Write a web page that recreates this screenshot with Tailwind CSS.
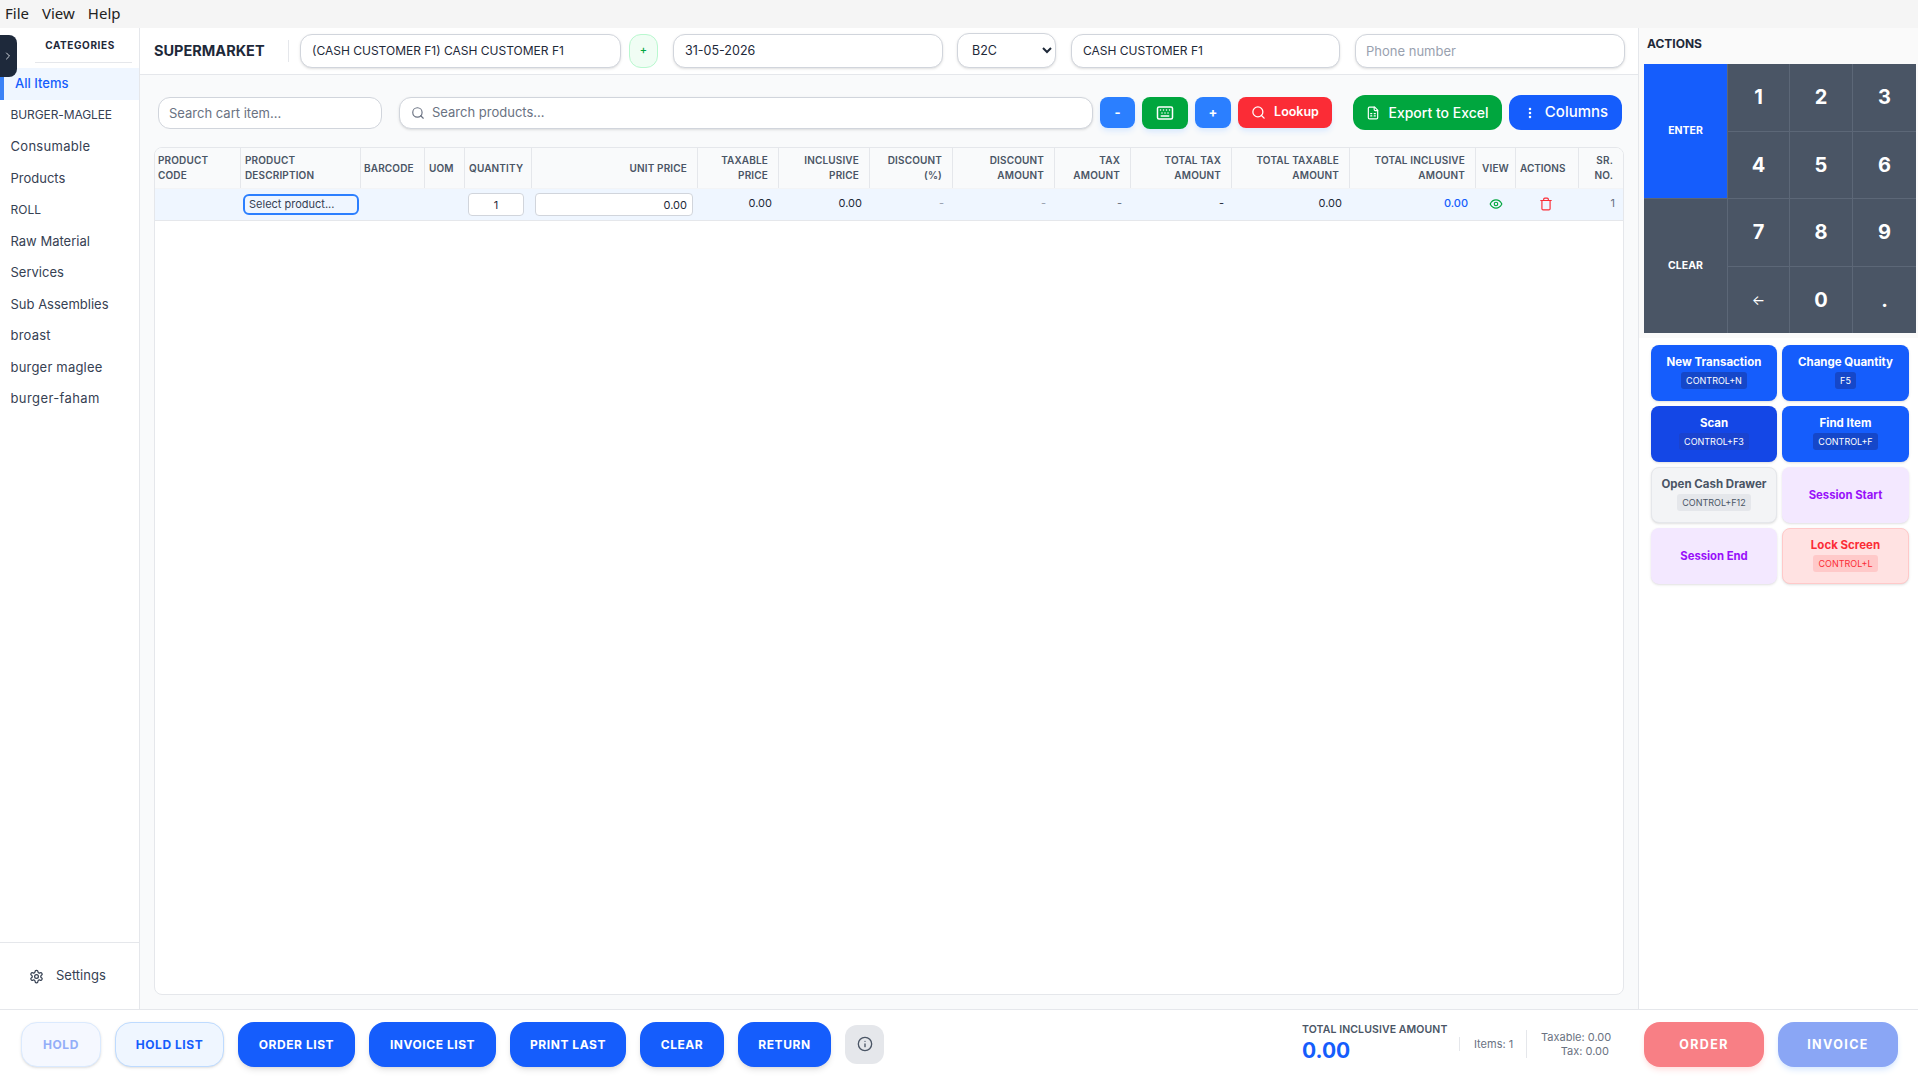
<!DOCTYPE html>
<html lang="en">
<head>
<meta charset="utf-8">
<title>POS</title>
<script src="https://cdn.jsdelivr.net/npm/@tailwindcss/browser@4"></script>
</head>
<body class="m-0 overflow-hidden font-['Inter',sans-serif] text-[#1e2939]">
<div class="relative flex h-[1078px] w-[1918px] flex-col bg-white">
  <!-- menu -->
  <div class="flex h-7 items-center gap-[13px] bg-[#f5f5f5] pb-[2px] pl-[5px] font-['Noto_Sans',sans-serif] text-[15px] text-[#222]">
    <span>File</span><span>View</span><span>Help</span>
  </div>

  <div class="flex min-h-0 flex-1">
    <!-- sidebar -->
    <aside class="flex w-[140px] flex-col border-r border-gray-200 bg-white">
      <div class="mx-auto mb-[5px] ml-[35px] flex h-[35px] w-[97px] items-center justify-center border-b border-gray-200 pr-[7px] text-[10px] font-bold tracking-[0.6px] text-[#1e2939]">CATEGORIES</div>
      <nav class="flex flex-col text-[13px] text-[#364153]">
        <a class="flex h-[31.5px] items-center border-l-4 border-[#3b82f6] bg-[#eff6ff] pl-[11px] font-medium text-[#155dfc]">All Items</a>
        <a class="flex h-[31.5px] items-center pl-[10.5px] text-[12px] tracking-[-0.1px]">BURGER-MAGLEE</a>
        <a class="flex h-[31.5px] items-center pl-[10.5px] tracking-[0.3px]">Consumable</a>
        <a class="flex h-[31.5px] items-center pl-[10.5px]">Products</a>
        <a class="flex h-[31.5px] items-center pl-[10.5px] text-[12px]">ROLL</a>
        <a class="flex h-[31.5px] items-center pl-[10.5px]">Raw Material</a>
        <a class="flex h-[31.5px] items-center pl-[10.5px]">Services</a>
        <a class="flex h-[31.5px] items-center pl-[10.5px]">Sub Assemblies</a>
        <a class="flex h-[31.5px] items-center pl-[10.5px] tracking-[0.2px]">broast</a>
        <a class="flex h-[31.5px] items-center pl-[10.5px] tracking-[0.2px]">burger maglee</a>
        <a class="flex h-[31.5px] items-center pl-[10.5px] tracking-[0.4px]">burger-faham</a>
      </nav>
      <div class="mt-auto flex h-[67px] items-center gap-[12px] border-t border-gray-200 pl-[29px] text-[13px] text-[#364153]">
        <svg class="h-[15px] w-[15px]" viewBox="0 0 24 24" fill="none" stroke="currentColor" stroke-width="2" stroke-linecap="round" stroke-linejoin="round"><path d="M12.22 2h-.44a2 2 0 0 0-2 2v.18a2 2 0 0 1-1 1.73l-.43.25a2 2 0 0 1-2 0l-.15-.08a2 2 0 0 0-2.73.73l-.22.38a2 2 0 0 0 .73 2.73l.15.1a2 2 0 0 1 1 1.72v.51a2 2 0 0 1-1 1.74l-.15.09a2 2 0 0 0-.73 2.73l.22.38a2 2 0 0 0 2.73.73l.15-.08a2 2 0 0 1 2 0l.43.25a2 2 0 0 1 1 1.73V20a2 2 0 0 0 2 2h.44a2 2 0 0 0 2-2v-.18a2 2 0 0 1 1-1.73l.43-.25a2 2 0 0 1 2 0l.15.08a2 2 0 0 0 2.73-.73l.22-.39a2 2 0 0 0-.73-2.73l-.15-.08a2 2 0 0 1-1-1.74v-.5a2 2 0 0 1 1-1.74l.15-.09a2 2 0 0 0 .73-2.73l-.22-.38a2 2 0 0 0-2.73-.73l-.15.08a2 2 0 0 1-2 0l-.43-.25a2 2 0 0 1-1-1.73V4a2 2 0 0 0-2-2z"/><circle cx="12" cy="12" r="3"/></svg>
        <span>Settings</span>
      </div>
    </aside>

    <!-- main -->
    <main class="flex min-w-0 flex-1 flex-col bg-[#f9fafb]">
      <header class="flex h-[47px] items-center border-b border-gray-200 bg-white pl-[14px] pb-px text-[13px]">
        <div class="w-[135px] border-r border-gray-200 text-[14.5px] leading-[22px] font-bold text-[#1e2939]">SUPERMARKET</div>
        <input class="ml-[11px] h-[34px] w-[321px] rounded-xl border border-gray-300 bg-white px-[11px] text-[12px] shadow-sm outline-none" value="(CASH CUSTOMER F1) CASH CUSTOMER F1">
        <button class="ml-[8px] flex h-[34px] w-[29px] items-center justify-center rounded-xl border border-green-200 bg-green-50 text-[11px] font-medium text-[#00a63e]">+</button>
        <input class="ml-[15px] h-[34px] w-[270px] rounded-xl border border-gray-300 bg-white px-[11px] text-[12.5px] shadow-sm outline-none" value="31-05-2026">
        <select class="ml-[14px] h-[35px] w-[99px] rounded-xl border border-gray-300 bg-white px-2.5 text-[12.5px] shadow-sm outline-none"><option>B2C</option></select>
        <input class="ml-[15px] h-[34px] w-[269px] rounded-xl border border-gray-300 bg-white px-[11px] text-[12px] shadow-sm outline-none" value="CASH CUSTOMER F1">
        <input class="ml-[15px] h-[34px] w-[270px] rounded-xl border border-gray-300 bg-white px-[10px] shadow-sm outline-none placeholder:text-gray-400" placeholder="Phone number">
      </header>

      <!-- toolbar -->
      <div class="flex h-[72px] items-center pt-[3px] pr-[16px] pl-[18px] text-[13px]">
        <input class="h-8 w-[224px] rounded-xl border border-gray-300 bg-white px-[10px] outline-none placeholder:text-gray-500" placeholder="Search cart item...">
        <div class="ml-[17px] flex h-8 w-[694px] items-center gap-[7px] rounded-xl border border-gray-300 bg-white pl-[11px] shadow-sm">
          <svg class="h-[14px] w-[14px] text-gray-500" viewBox="0 0 24 24" fill="none" stroke="currentColor" stroke-width="2" stroke-linecap="round" stroke-linejoin="round"><circle cx="11" cy="11" r="8"/><path d="m21 21-4.3-4.3"/></svg>
          <input class="min-w-0 flex-1 bg-transparent outline-none placeholder:text-gray-500" placeholder="Search products...">
        </div>
        <button class="ml-[7px] flex h-[31px] w-[35px] items-center justify-center rounded-lg bg-[#2b7fff] text-[13px] font-bold text-white shadow-md shadow-blue-100">-</button>
        <button class="ml-[7px] flex h-8 w-[46px] items-center justify-center rounded-lg bg-[#00a63e] text-white shadow-md shadow-blue-100">
          <svg class="h-[18px] w-[18px]" viewBox="0 0 24 24" fill="none" stroke="currentColor" stroke-width="2" stroke-linecap="round" stroke-linejoin="round"><rect x="2" y="4" width="20" height="16" rx="2"/><path d="M6 8h.01M10 8h.01M14 8h.01M18 8h.01M8 12h.01M12 12h.01M16 12h.01M7 16h10"/></svg>
        </button>
        <button class="ml-[7px] flex h-[31px] w-[36px] items-center justify-center rounded-lg bg-[#2b7fff] text-[13px] font-bold text-white shadow-md shadow-blue-100">+</button>
        <button class="ml-[7px] flex h-[31px] w-[94px] items-center justify-center gap-[8px] rounded-lg bg-[#fb2c36] text-[12.5px] font-semibold text-white shadow-md shadow-blue-100">
          <svg class="h-[15px] w-[15px]" viewBox="0 0 24 24" fill="none" stroke="currentColor" stroke-width="2" stroke-linecap="round" stroke-linejoin="round"><circle cx="11" cy="11" r="8"/><path d="m21 21-4.3-4.3"/></svg>
          Lookup
        </button>
        <button class="ml-[21px] flex h-[35px] w-[149px] items-center justify-center gap-[8px] rounded-xl bg-[#00a63e] text-[14px] font-medium text-white">
          <svg class="h-[14px] w-[14px]" viewBox="0 0 24 24" fill="none" stroke="currentColor" stroke-width="2" stroke-linecap="round" stroke-linejoin="round"><path d="M15 2H6a2 2 0 0 0-2 2v16a2 2 0 0 0 2 2h12a2 2 0 0 0 2-2V7Z"/><path d="M14 2v4a2 2 0 0 0 2 2h4"/><path d="M8 13h2M14 13h2M8 17h2M14 17h2"/></svg>
          Export to Excel
        </button>
        <button class="ml-[7px] flex h-[35px] w-[113px] items-center justify-center gap-[8px] rounded-xl bg-[#155dfc] text-[15px] font-medium text-white">
          <svg class="h-[14px] w-[14px]" viewBox="0 0 24 24" fill="none" stroke="currentColor" stroke-width="2.4" stroke-linecap="round" stroke-linejoin="round"><circle cx="12" cy="12" r="1"/><circle cx="12" cy="5" r="1"/><circle cx="12" cy="19" r="1"/></svg>
          Columns
        </button>
      </div>

      <!-- table -->
      <div class="mx-[14px] mb-[14px] flex-1 overflow-hidden rounded-lg border border-gray-200 bg-white">
        <div class="grid grid-cols-[86px_120px_64px_40px_67px_166px_81px_91px_83px_102px_76px_101px_118px_126px_40px_63px_44px] border-b border-gray-100 bg-[#f9fafb] text-[10px] leading-[15px] font-semibold tracking-[0.15px] text-[#4a5565]">
          <div class="flex h-[40px] items-center border-r border-gray-200 pl-[3px]">PRODUCT<br>CODE</div>
          <div class="flex h-[40px] items-center border-r border-gray-200 pl-[4px]">PRODUCT<br>DESCRIPTION</div>
          <div class="flex h-[40px] items-center border-r border-gray-200 pl-[3px]">BARCODE</div>
          <div class="flex h-[40px] items-center border-r border-gray-200 pl-[4px]">UOM</div>
          <div class="flex h-[40px] items-center border-r border-gray-200 pl-[4px]">QUANTITY</div>
          <div class="flex h-[40px] items-center justify-end border-r border-gray-200 pr-[10px]">UNIT PRICE</div>
          <div class="flex h-[40px] items-center justify-end border-r border-gray-200 pr-[10px] text-right">TAXABLE<br>PRICE</div>
          <div class="flex h-[40px] items-center justify-end border-r border-gray-200 pr-[10px] text-right">INCLUSIVE<br>PRICE</div>
          <div class="flex h-[40px] items-center justify-end border-r border-gray-200 pr-[10px] text-right">DISCOUNT<br>(%)</div>
          <div class="flex h-[40px] items-center justify-end border-r border-gray-200 pr-[10px] text-right">DISCOUNT<br>AMOUNT</div>
          <div class="flex h-[40px] items-center justify-end border-r border-gray-200 pr-[10px] text-right">TAX<br>AMOUNT</div>
          <div class="flex h-[40px] items-center justify-end border-r border-gray-200 pr-[10px] text-right">TOTAL TAX<br>AMOUNT</div>
          <div class="flex h-[40px] items-center justify-end border-r border-gray-200 pr-[10px] text-right">TOTAL TAXABLE<br>AMOUNT</div>
          <div class="flex h-[40px] items-center justify-end border-r border-gray-200 pr-[10px] text-right">TOTAL INCLUSIVE<br>AMOUNT</div>
          <div class="flex h-[40px] items-center justify-center border-r border-gray-200">VIEW</div>
          <div class="flex h-[40px] items-center border-r border-gray-200 pl-[4px] tracking-normal">ACTIONS</div>
          <div class="flex h-[40px] items-center justify-end pr-[10px] text-right">SR.<br>NO.</div>
        </div>
        <div class="grid h-[32px] grid-cols-[86px_120px_64px_40px_67px_166px_81px_91px_83px_102px_76px_101px_118px_126px_40px_63px_44px] items-center border-b border-gray-200 bg-[#eff6ff] text-[11px] text-[#1e2939]">
          <div></div>
          <div class="pl-[2px]"><div class="flex h-[21px] w-[116px] items-center rounded-md border-2 border-[#2b7fff] pb-[1px] pl-[4px] text-[#364153]">Select product...</div></div>
          <div></div>
          <div></div>
          <div class="pl-[3px]"><input class="h-[23px] w-[56px] rounded-[4px] border border-gray-300 bg-white text-center outline-none" value="1"></div>
          <div class="pl-[3px]"><input class="h-[23px] w-[158px] rounded-[4px] border border-gray-300 bg-white pr-[5px] text-right outline-none" value="0.00"></div>
          <div class="pr-[7px] pb-[3px] text-right">0.00</div>
          <div class="pr-[8px] pb-[3px] text-right">0.00</div>
          <div class="pr-[9px] pb-[3px] text-right text-gray-400">-</div>
          <div class="pr-[9px] pb-[3px] text-right text-gray-400">-</div>
          <div class="pr-[9px] pb-[3px] text-right text-gray-500">-</div>
          <div class="pr-[8px] pb-[3px] text-right">-</div>
          <div class="pr-[8px] pb-[3px] text-right">0.00</div>
          <div class="pr-[8px] pb-[3px] text-right font-medium text-[#155dfc]">0.00</div>
          <div class="flex justify-center pb-[1px]"><svg class="h-[14px] w-[14px] text-[#00a63e]" viewBox="0 0 24 24" fill="none" stroke="currentColor" stroke-width="2" stroke-linecap="round" stroke-linejoin="round"><path d="M2 12s3.5-7 10-7 10 7 10 7-3.5 7-10 7-10-7-10-7Z"/><circle cx="12" cy="12" r="3"/></svg></div>
          <div class="flex justify-center pr-[4px] pb-[1px]"><svg class="h-[14px] w-[14px] text-[#fb2c36]" viewBox="0 0 24 24" fill="none" stroke="currentColor" stroke-width="2" stroke-linecap="round" stroke-linejoin="round"><path d="M3 6h18"/><path d="M19 6v14a2 2 0 0 1-2 2H7a2 2 0 0 1-2-2V6"/><path d="M8 6V4a2 2 0 0 1 2-2h4a2 2 0 0 1 2 2v2"/></svg></div>
          <div class="pr-[8px] pb-[3px] text-right text-gray-500">1</div>
        </div>
      </div>
    </main>

    <!-- right -->
    <aside class="flex w-[280px] flex-col border-l border-gray-200 bg-white">
      <div class="flex h-[32px] items-center bg-[#fafafa] pl-[8px] text-[12px] font-bold text-[#1e2939]">ACTIONS</div>
      <div class="bg-[#fafafa] pt-[4px] pr-[2px] pb-[5px] pl-[5px]">
        <div class="grid h-[269px] grid-cols-[83px_61px_62px_63px] grid-rows-4 gap-px bg-[#5c6777] text-white">
          <button class="row-span-2 bg-[#155dfc] text-[10.5px] font-bold">ENTER</button>
          <button class="bg-[#4a5565] text-[20px] font-bold">1</button>
          <button class="bg-[#4a5565] text-[20px] font-bold">2</button>
          <button class="bg-[#4a5565] text-[20px] font-bold">3</button>
          <button class="bg-[#4a5565] text-[20px] font-bold">4</button>
          <button class="bg-[#4a5565] text-[20px] font-bold">5</button>
          <button class="bg-[#4a5565] text-[20px] font-bold">6</button>
          <button class="row-span-2 bg-[#4a5565] text-[10.5px] font-bold">CLEAR</button>
          <button class="bg-[#4a5565] text-[20px] font-bold">7</button>
          <button class="bg-[#4a5565] text-[20px] font-bold">8</button>
          <button class="bg-[#4a5565] text-[20px] font-bold">9</button>
          <button class="bg-[#4a5565] text-[14px] font-normal">←</button>
          <button class="bg-[#4a5565] text-[20px] font-bold">0</button>
          <button class="bg-[#4a5565] text-[20px] font-bold">.</button>
        </div>
      </div>
      <div class="grid grid-cols-[126px_127px] grid-rows-[56px_56px_56px_56px] gap-[5px] pt-[7px] pl-[12px] text-[11.5px] font-bold">
        <button class="flex flex-col items-center justify-center gap-[1px] rounded-lg bg-[#155dfc] pb-[3px] text-white shadow-sm">New Transaction<span class="rounded-[3px] bg-[#1547c9] px-[5px] py-[2px] text-[9px] leading-[13px] font-normal">CONTROL+N</span></button>
        <button class="flex flex-col items-center justify-center gap-[1px] rounded-lg bg-[#155dfc] pb-[3px] text-white shadow-sm">Change Quantity<span class="rounded-[3px] bg-[#1547c9] px-[5px] py-[2px] text-[9px] leading-[13px] font-normal">F5</span></button>
        <button class="flex flex-col items-center justify-center gap-[1px] rounded-lg bg-[#1447e6] pb-[3px] text-white shadow-sm">Scan<span class="rounded-[3px] bg-[#1a43cf] px-[5px] py-[2px] text-[9px] leading-[13px] font-normal">CONTROL+F3</span></button>
        <button class="flex flex-col items-center justify-center gap-[1px] rounded-lg bg-[#155dfc] pb-[3px] text-white shadow-sm">Find Item<span class="rounded-[3px] bg-[#1547c9] px-[5px] py-[2px] text-[9px] leading-[13px] font-normal">CONTROL+F</span></button>
        <button class="flex flex-col items-center justify-center gap-[1px] rounded-lg border border-gray-200 bg-[#f3f4f6] pb-[3px] text-[#4a5565] shadow-sm">Open Cash Drawer<span class="rounded-[3px] bg-[#e5e7eb] px-[5px] py-[2px] text-[9px] leading-[13px] font-normal">CONTROL+F12</span></button>
        <button class="flex flex-col items-center justify-center rounded-lg bg-[#f3e8ff] text-[11.3px] text-[#9810fa] shadow-sm">Session Start</button>
        <button class="flex flex-col items-center justify-center rounded-lg bg-[#f3e8ff] text-[11.3px] text-[#9810fa] shadow-sm">Session End</button>
        <button class="flex flex-col items-center justify-center gap-[1px] rounded-lg border border-[#ffc9c9] bg-[#ffe2e2] pb-[3px] text-[#fb2c36] shadow-sm">Lock Screen<span class="rounded-[3px] bg-[#ffc9c9] px-[5px] py-[2px] text-[9px] leading-[13px] font-normal">CONTROL+L</span></button>
      </div>
    </aside>
  </div>

  <!-- footer -->
  <footer class="flex h-[69px] items-center border-t border-gray-200 bg-white pl-[21px] text-[12px] font-bold tracking-[0.55px] text-white">
    <button class="h-[45px] w-[80px] rounded-2xl border border-[#dbeafe] bg-[#f5f8ff] pt-[2px] text-[#93aef8] shadow-sm">HOLD</button>
    <button class="ml-[14px] h-[45px] w-[109px] rounded-2xl border border-[#bedbff] bg-[#eff6ff] pt-[2px] text-[#155dfc] shadow-sm">HOLD LIST</button>
    <button class="ml-[14px] h-[45px] w-[117px] rounded-2xl bg-[#155dfc] pt-[2px] shadow-md">ORDER LIST</button>
    <button class="ml-[14px] h-[45px] w-[127px] rounded-2xl bg-[#155dfc] pt-[2px] shadow-md">INVOICE LIST</button>
    <button class="ml-[14px] h-[45px] w-[116px] rounded-2xl bg-[#155dfc] pt-[2px] shadow-md">PRINT LAST</button>
    <button class="ml-[14px] h-[45px] w-[84px] rounded-2xl bg-[#155dfc] pt-[2px] shadow-md">CLEAR</button>
    <button class="ml-[14px] h-[45px] w-[93px] rounded-2xl bg-[#155dfc] pt-[2px] shadow-md">RETURN</button>
    <button class="ml-[14px] flex h-[39px] w-[39px] items-center justify-center rounded-xl bg-[#e5e7eb] text-[#4a5565]">
      <svg class="h-[16px] w-[16px]" viewBox="0 0 24 24" fill="none" stroke="currentColor" stroke-width="2" stroke-linecap="round" stroke-linejoin="round"><circle cx="12" cy="12" r="10"/><path d="M12 16v-4M12 8h.01"/></svg>
    </button>
    <div class="ml-auto flex items-center font-normal tracking-normal">
      <div class="flex w-[157px] flex-col">
        <span class="text-[10.5px] leading-[14px] font-semibold tracking-[0.1px] text-[#4a5565]">TOTAL INCLUSIVE AMOUNT</span>
        <span class="text-[21px] leading-[28px] font-bold text-[#155dfc]">0.00</span>
      </div>
      <div class="h-[14px] w-px bg-gray-200"></div>
      <span class="ml-[14px] w-[52px] text-[11px] whitespace-nowrap text-[#6a7282]">Items: 1</span>
      <div class="h-[28px] w-px bg-gray-200"></div>
      <div class="ml-[14px] flex w-[68px] flex-col text-right text-[11px] leading-[14px] whitespace-nowrap text-[#6a7282]"><span>Taxable: 0.00</span><span>Tax: 0.00</span></div>
      <button class="ml-[35px] h-[45px] w-[120px] rounded-2xl bg-[#f87f85] pt-[2px] text-[12.5px] font-bold tracking-[1.4px] text-white shadow-md shadow-red-100">ORDER</button>
      <button class="ml-[14px] h-[45px] w-[120px] rounded-2xl bg-[#8aa6f5] pt-[2px] text-[12.5px] font-bold tracking-[1.4px] text-white shadow-md shadow-blue-100">INVOICE</button>
      <div class="w-[20px]"></div>
    </div>
  </footer>

  <!-- sidebar toggle overlay -->
  <button class="absolute top-[35px] left-0 flex h-[42px] w-[17px] items-center justify-center rounded-r-lg bg-[#1e293b] pr-[2px] text-gray-300">
    <svg class="h-[12px] w-[12px]" viewBox="0 0 24 24" fill="none" stroke="currentColor" stroke-width="2" stroke-linecap="round" stroke-linejoin="round"><path d="m9 18 6-6-6-6"/></svg>
  </button>
</div>
</body>
</html>
